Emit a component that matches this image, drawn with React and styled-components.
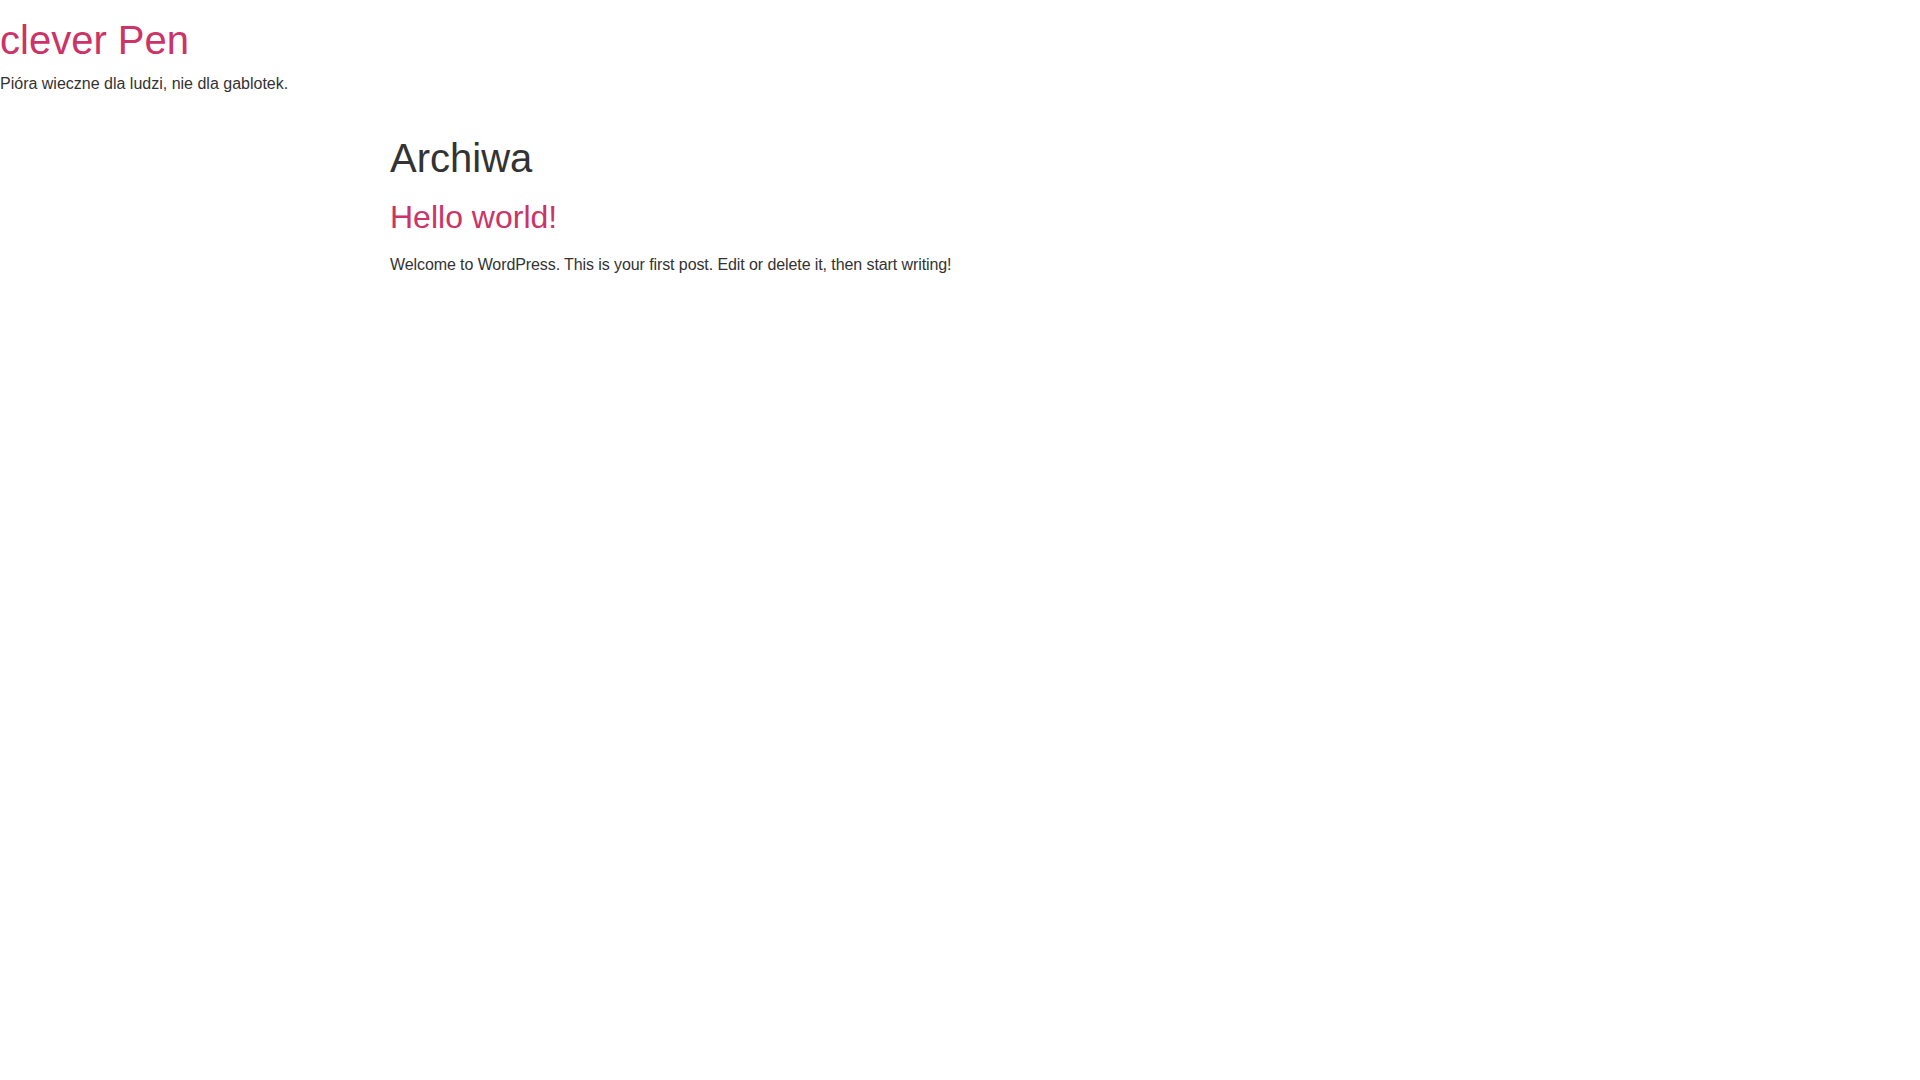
import React from 'react'
import styled, { createGlobalStyle } from 'styled-components'

const GlobalStyle = createGlobalStyle`
html, body {
  margin: 0;
  padding: 0;
  background: #fff;
}
body {
  font-family: "Liberation Sans", Arial, Helvetica, sans-serif;
  font-size: 16px;
  line-height: 1.5;
  color: #333;
}
a {
  color: #c36;
  text-decoration: none;
}
`

const Header = styled.header`
display: flex;
flex-direction: column;
align-items: flex-start;
padding: 16px 0;
`
const SiteTitle = styled.h1`
margin: 0 0 8px;
font-size: 40px;
font-weight: 500;
line-height: 1.2;
`
const Description = styled.p`
margin: 0 0 16px;
`
const Main = styled.main`
max-width: 1140px;
margin: 0 auto;
`
const PageTitle = styled.h1`
margin: 6px 0 16px;
font-size: 40px;
font-weight: 500;
line-height: 1.2;
color: #333;
`
const PostTitle = styled.h2`
margin: 8px 0 17px;
font-size: 32px;
font-weight: 500;
line-height: 1.2;
`
const Excerpt = styled.p`
margin: 0 0 14px;
letter-spacing: -0.09px;
`

const App = () => {
  return (
    <>
      <GlobalStyle />
      <Header>
        <SiteTitle>
          <a href="#">clever Pen</a>
        </SiteTitle>
        <Description>Pióra wieczne dla ludzi, nie dla gablotek.</Description>
      </Header>
      <Main>
        <PageTitle>Archiwa</PageTitle>
        <article>
          <PostTitle>
            <a href="#">Hello world!</a>
          </PostTitle>
          <Excerpt>Welcome to WordPress. This is your first post. Edit or delete it, then start writing!</Excerpt>
        </article>
      </Main>
    </>
  )
}

export default App
